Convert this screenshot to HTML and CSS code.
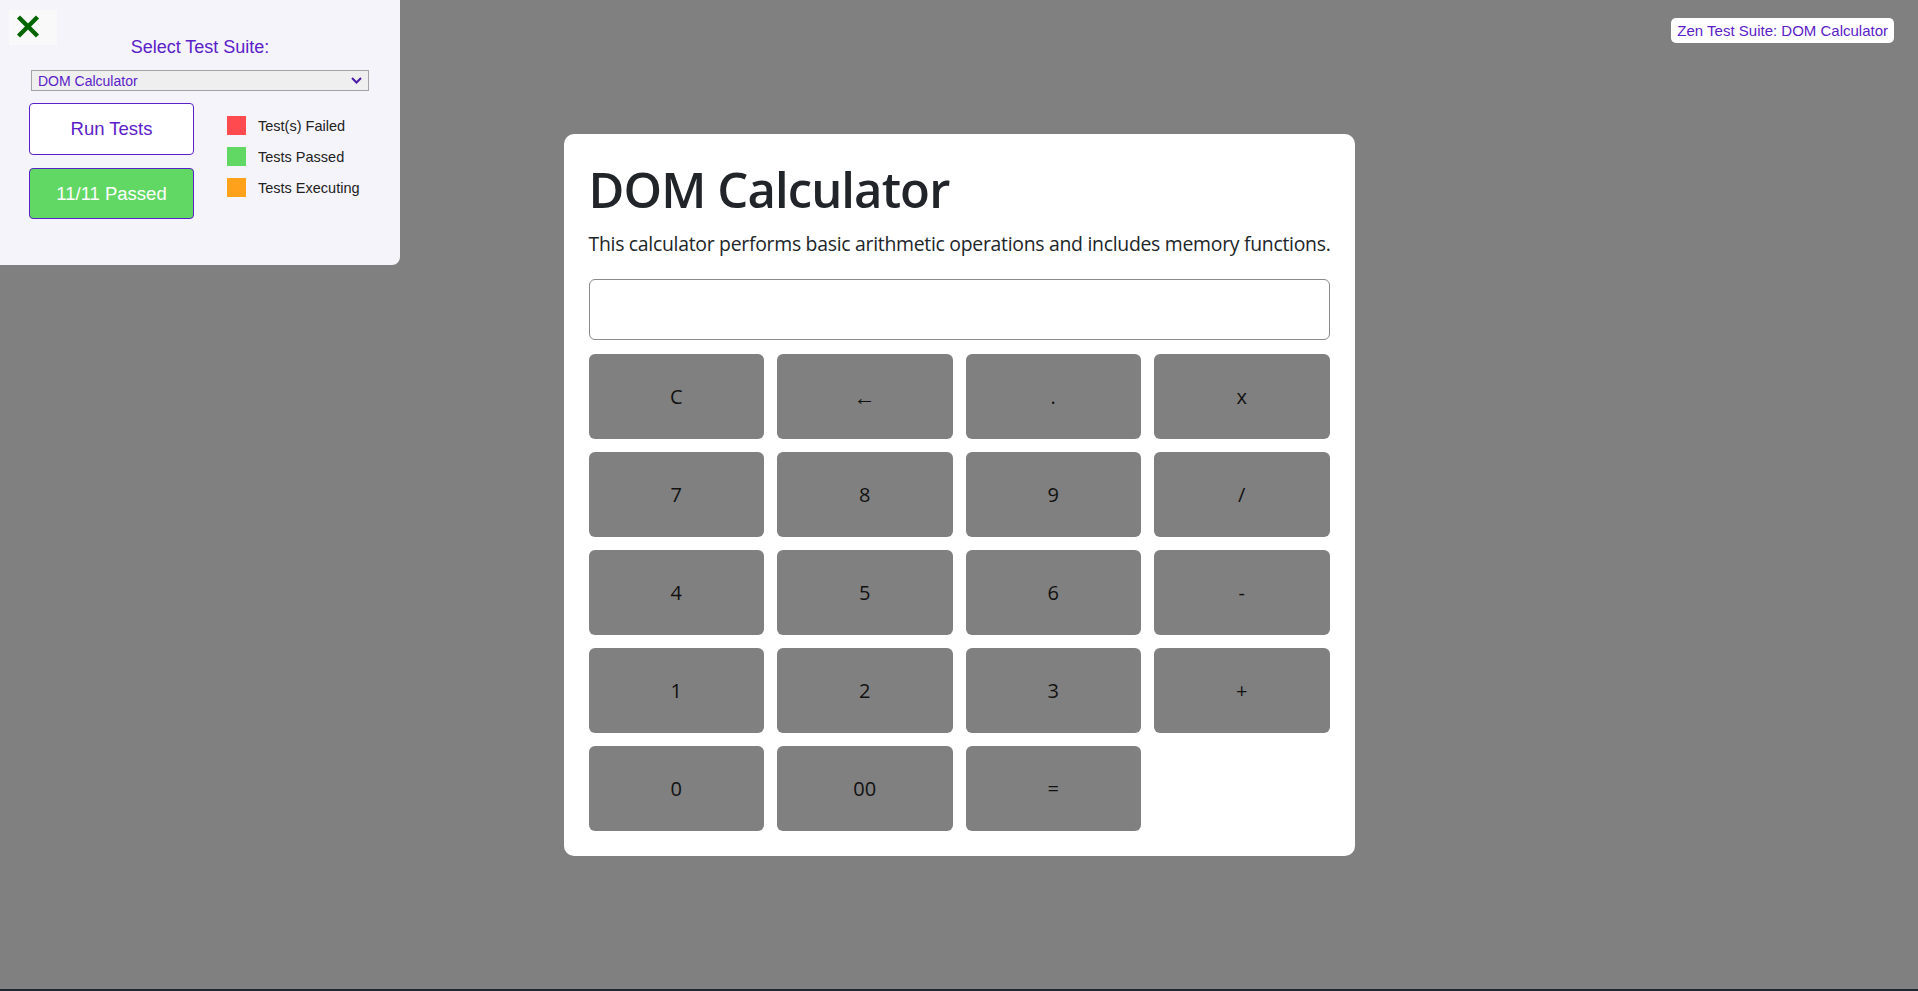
FILE: index.html
```html
<!DOCTYPE html>
<html lang="en">
<head>
<meta charset="utf-8">
<title>DOM Calculator</title>
<link rel="stylesheet" href="styles.css">
</head>
<body>
<aside class="suite-panel">
  <button class="close-btn" aria-label="Close">
    <svg width="24" height="23" viewBox="0 0 24 23"><path d="M2.5 2 L21.5 21 M21.5 2 L2.5 21" stroke="#006400" stroke-width="4.4" fill="none"/></svg>
  </button>
  <div class="suite-title">Select Test Suite:</div>
  <div class="suite-select">
    <span>DOM Calculator</span>
    <svg width="11" height="7" viewBox="0 0 11 7"><path d="M1 1 L5.5 5.5 L10 1" stroke="#4a1aa8" stroke-width="2" fill="none"/></svg>
  </div>
  <div class="suite-row">
    <div class="suite-actions">
      <button class="run-btn">Run Tests</button>
      <button class="result-btn">11/11 Passed</button>
    </div>
    <ul class="legend">
      <li><span class="swatch swatch-fail"></span>Test(s) Failed</li>
      <li><span class="swatch swatch-pass"></span>Tests Passed</li>
      <li><span class="swatch swatch-exec"></span>Tests Executing</li>
    </ul>
  </div>
</aside>
<div class="suite-badge">Zen Test Suite: DOM Calculator</div>

<main class="stage">
  <section class="card">
    <h1 class="title">DOM Calculator</h1>
    <p class="desc">This calculator performs basic arithmetic operations and includes memory functions.</p>
    <input class="display" type="text" aria-label="display">
    <div class="keys">
      <button class="key">C</button>
      <button class="key key-arrow">←</button>
      <button class="key">.</button>
      <button class="key">x</button>
      <button class="key">7</button>
      <button class="key">8</button>
      <button class="key">9</button>
      <button class="key">/</button>
      <button class="key">4</button>
      <button class="key">5</button>
      <button class="key">6</button>
      <button class="key">-</button>
      <button class="key">1</button>
      <button class="key">2</button>
      <button class="key">3</button>
      <button class="key">+</button>
      <button class="key">0</button>
      <button class="key">00</button>
      <button class="key">=</button>
    </div>
  </section>
</main>
<div class="bottom-line"></div>
</body>
</html>
```

FILE: styles.css
```css
* { box-sizing: border-box; }
html, body { margin: 0; padding: 0; }
body {
  background: #808080;
  min-height: 100vh;
  display: flex;
  flex-direction: column;
  font-family: "Open Sans", "Noto Sans", sans-serif;
  color: #212529;
}
.stage {
  flex: 1;
  display: flex;
  align-items: center;
  justify-content: center;
}
.bottom-line {
  height: 2px;
  background: #1e2833;
}
.card {
  width: 791px;
  background: #fff;
  border-radius: 10px;
  padding: 25px;
}
.title {
  margin: 0 0 10px;
  font-size: 49px;
  font-weight: 600;
  letter-spacing: -0.9px;
  line-height: 60px;
  color: #212529;
}
.desc {
  margin: 0 0 20px;
  font-size: 19.4px;
  letter-spacing: -0.28px;
  line-height: 30px;
  white-space: nowrap;
}
.display {
  display: block;
  width: 100%;
  height: 61px;
  border: 1px solid #8a8a8a;
  border-radius: 6px;
  background: #fff;
  margin: 0 0 14px;
  font-size: 20px;
}
.keys {
  display: grid;
  grid-template-columns: repeat(4, 1fr);
  grid-auto-rows: 85px;
  gap: 13px;
}
.key {
  background: #808080;
  border: none;
  border-radius: 6px;
  font-family: "Open Sans", "Noto Sans", sans-serif;
  font-size: 20px;
  color: #111;
  padding: 0;
}
.key-arrow {
  font-size: 22px;
}

/* test suite panel */
.suite-panel {
  position: fixed;
  top: 0;
  left: 0;
  width: 400px;
  height: 265px;
  background: #f5f4fb;
  border-bottom-right-radius: 8px;
  padding: 37px 0 0 29px;
  font-family: "Liberation Sans", Arial, sans-serif;
}
.close-btn {
  position: absolute;
  top: 10px;
  left: 9px;
  width: 48px;
  height: 35px;
  border: none;
  background: #f9f9fa;
  padding: 5px 0 0 7px;
  display: flex;
  align-items: flex-start;
  justify-content: flex-start;
}
.suite-title {
  width: 342px;
  text-align: center;
  font-size: 18px;
  line-height: 21px;
  color: #5b21c9;
  margin-bottom: 12px;
}
.suite-select {
  margin-left: 2px;
  width: 338px;
  height: 21px;
  border: 1px solid #a3a3a3;
  background: #efefef;
  display: flex;
  align-items: center;
  justify-content: space-between;
  padding: 0 6px 0 6px;
  font-size: 14px;
  color: #5b21c9;
}
.suite-row {
  display: flex;
  margin-top: 12px;
  gap: 33px;
}
.suite-actions {
  display: flex;
  flex-direction: column;
  gap: 13px;
}
.run-btn, .result-btn {
  width: 165px;
  height: 52px;
  border: 1px solid #5b21c9;
  border-radius: 4px;
  font-family: "Liberation Sans", Arial, sans-serif;
  font-size: 18.5px;
}
.run-btn {
  background: #fff;
  color: #5b21c9;
}
.result-btn {
  height: 51px;
  background: #61d764;
  color: #fff;
}
.legend {
  list-style: none;
  margin: 13px 0 0;
  padding: 0;
  display: flex;
  flex-direction: column;
  gap: 12px;
}
.legend li {
  display: flex;
  align-items: center;
  gap: 12px;
  height: 19px;
  font-size: 14.5px;
  color: #222;
}
.swatch {
  width: 19px;
  height: 19px;
  display: inline-block;
}
.swatch-fail { background: #ff4a50; }
.swatch-pass { background: #61d764; }
.swatch-exec { background: #ffa11b; }

.suite-badge {
  position: fixed;
  top: 18px;
  right: 24px;
  height: 25px;
  padding: 0 6px;
  background: #fff;
  border-radius: 5px;
  font-family: "Liberation Sans", Arial, sans-serif;
  font-size: 15px;
  line-height: 25px;
  color: #5b21c9;
}
```
